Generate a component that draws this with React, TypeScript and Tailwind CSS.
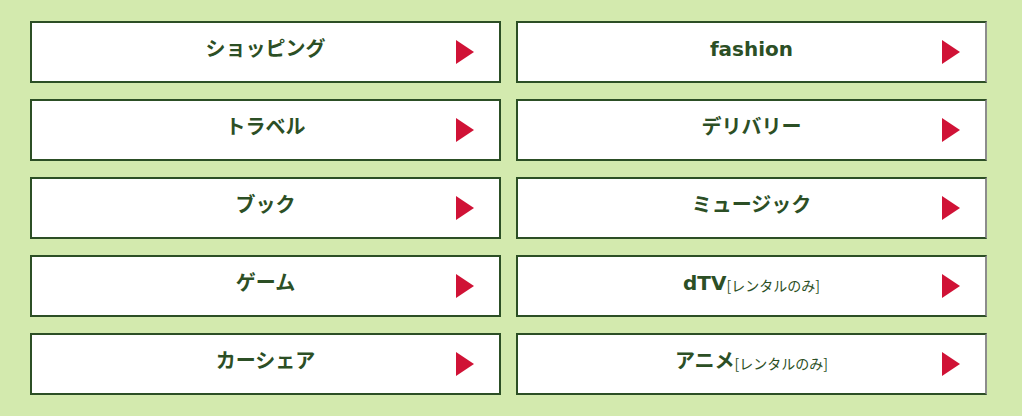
const items: { label: string; note?: string }[] = [
  { label: 'ショッピング' },
  { label: 'fashion' },
  { label: 'トラベル' },
  { label: 'デリバリー' },
  { label: 'ブック' },
  { label: 'ミュージック' },
  { label: 'ゲーム' },
  { label: 'dTV', note: '[レンタルのみ]' },
  { label: 'カーシェア' },
  { label: 'アニメ', note: '[レンタルのみ]' },
];

function LinkBox({ label, note, right }: { label: string; note?: string; right: boolean }) {
  return (
    <a
      href="#"
      className={
        'relative flex h-[62px] items-center justify-center border-2 border-[#2c4f25] bg-white pb-[6px] text-[#2c4f25] ' +
        (right ? 'border-r-[#8c8c8c]' : '')
      }
    >
      <span
        className="text-[20px] font-bold leading-none"
        style={{ fontFamily: '"DejaVu Sans", "Noto Sans CJK JP", sans-serif' }}
      >
        {label}
      </span>
      {note && <span className="text-[14px] leading-none pt-[3px]">{note}</span>}
      <svg
        className="absolute right-[25px] top-[17px]"
        width="18"
        height="24"
        viewBox="0 0 18 24"
      >
        <path d="M0 0 L18 12 L0 24 Z" fill="#d01236" />
      </svg>
    </a>
  );
}

export default function App() {
  return (
    <div
      className="h-[416px] w-[1022px] bg-[#d3eaae] pl-[30px] pt-[21px]"
      style={{ fontFamily: '"Noto Sans CJK JP", "Noto Sans", sans-serif' }}
    >
      <div className="grid grid-cols-[471px_471px] gap-x-[15px] gap-y-4">
        {items.map((it, i) => (
          <LinkBox key={it.label} label={it.label} note={it.note} right={i % 2 === 1} />
        ))}
      </div>
    </div>
  );
}
